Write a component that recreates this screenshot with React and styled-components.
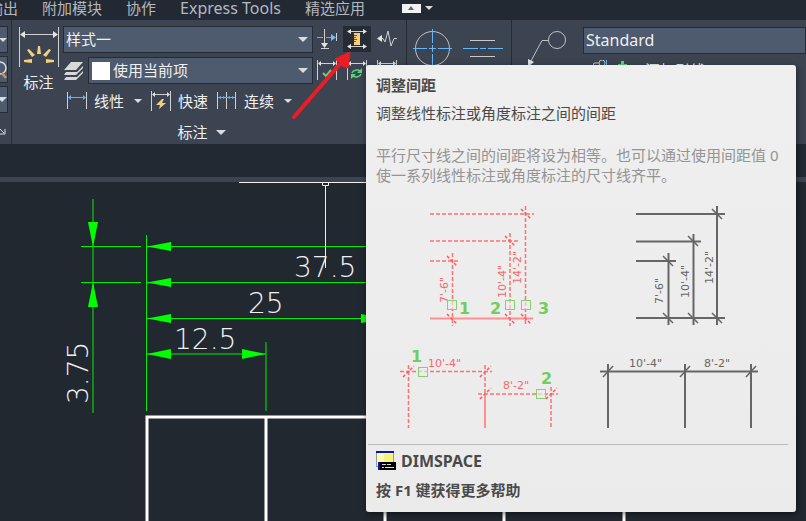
import styled, { createGlobalStyle } from "styled-components";

const quickTools = [
  { label: "线性", icon: <LinearIcon />, menu: true },
  { label: "快速", icon: <QuickIcon />, menu: false },
  { label: "连续", icon: <ContinueIcon />, menu: true },
];

const dimTools = [
  { label: "打断", icon: <BreakIcon /> },
  { label: "调整间距", icon: <SpaceIcon />, active: true },
  { label: "折弯标注", icon: <JogIcon /> },
  { label: "检验", icon: <CheckIcon /> },
  { label: "更新", icon: <UpdateIcon /> },
  { label: "重新关联", icon: <BarsIcon /> },
];

function App() {
  return (
    <>
      <GlobalStyle />
      <Window>
        <TabBar>
          <CutTab>
            <Tab href="#output">输出</Tab>
          </CutTab>
          <Tab href="#addins">附加模块</Tab>
          <Tab href="#collab">协作</Tab>
          <Tab href="#express" $latin>
            Express Tools
          </Tab>
          <Tab href="#featured">精选应用</Tab>
          <Collapse>
            <CollapseButton aria-label="最小化功能区">
              <svg width="6" height="4" viewBox="0 0 6 4">
                <path d="M0 4L3 0L6 4Z" fill="#666" />
              </svg>
            </CollapseButton>
            <Caret />
          </Collapse>
        </TabBar>

        <Ribbon>
          <EdgePanel />
          <DimensionPanel />
          <CenterPanel>
            <PlainButton aria-label="圆心标记">
              <CenterMarkIcon />
            </PlainButton>
            <PlainButton aria-label="中心线">
              <CenterLineIcon />
            </PlainButton>
          </CenterPanel>
          <LeaderPanel>
            <PlainButton aria-label="多重引线">
              <LeaderIcon />
            </PlainButton>
            <LeaderColumn>
              <Combo $latin>
                <select aria-label="多重引线样式">
                  <option>Standard</option>
                </select>
              </Combo>
              <AddLeader>
                <AddLeaderIcon />
                添加引线
              </AddLeader>
            </LeaderColumn>
          </LeaderPanel>
        </Ribbon>

        <FileTabs />
        <Canvas>
          <Drawing />
        </Canvas>

        <Pointer />
        <Tooltip />
      </Window>
    </>
  );
}

export default App;

function EdgePanel() {
  return (
    <Edge>
      <EdgeBox aria-label="文字样式">
        <Caret $size={8} />
      </EdgeBox>
      <EdgeBox aria-label="查找文字">
        <svg width="14" height="20" viewBox="0 0 14 20">
          <circle cx="7" cy="8" r="6" fill="none" stroke="#ddd" strokeWidth="1.5" />
          <path d="M9 13L13 18" stroke="#c9935f" strokeWidth="2.5" />
        </svg>
      </EdgeBox>
      <EdgeBox aria-label="文字高度">
        <Caret $size={10} />
      </EdgeBox>
      <Launcher aria-label="文字设置">
        <svg width="6" height="6" viewBox="0 0 6 6">
          <path d="M0 0L4 4M5 0V5H0" fill="none" stroke="#ddd" />
        </svg>
      </Launcher>
    </Edge>
  );
}

function DimensionPanel() {
  return (
    <Dimension>
      <DimensionMain>
        <BigButton>
          <DimIcon />
          标注
        </BigButton>
        <Middle>
          <Combo>
            <select aria-label="标注样式">
              <option>样式一</option>
            </select>
            <Caret $size={10} />
          </Combo>
          <LayerRow>
            <LayersIcon />
            <Combo $swatch>
              <select aria-label="标注图层">
                <option>使用当前项</option>
              </select>
              <Swatch />
              <Caret $size={10} />
            </Combo>
          </LayerRow>
          <QuickRow>
            {quickTools.map((tool) => (
              <QuickGroup key={tool.label}>
                <QuickButton>
                  {tool.icon}
                  {tool.label}
                </QuickButton>
                {tool.menu && <Caret />}
              </QuickGroup>
            ))}
          </QuickRow>
        </Middle>
        <ToolGrid>
          {dimTools.map((tool) => (
            <ToolButton
              key={tool.label}
              aria-label={tool.label}
              $active={tool.active}
            >
              {tool.icon}
            </ToolButton>
          ))}
        </ToolGrid>
      </DimensionMain>
      <PanelTitle>
        标注
        <Caret $size={10} />
      </PanelTitle>
    </Dimension>
  );
}

function Caret({ $size = 8 }) {
  return (
    <CaretSvg width={$size} height={$size / 2} viewBox="0 0 10 5">
      <path d="M0 0H10L5 5Z" fill="#dcdcdc" />
    </CaretSvg>
  );
}

function DimIcon() {
  return (
    <svg width="40" height="42" viewBox="0 0 40 42">
      <path d="M0.5 1V41M39.5 1V41M2 8.5H38" stroke="#cfd0d2" />
      <path d="M1 8.5L6 5V12ZM39 8.5L34 5V12Z" fill="#e3e3e3" />
      <g fill="#f8cf79">
        <path d="M19 20H21L22 28H18Z" />
        <path d="M8 24L10 23L16 29L13 31Z" />
        <path d="M32 24L30 23L24 29L27 31Z" />
        <path d="M5 34L13 33V37L5 36Z" />
        <path d="M35 34L27 33V37L35 36Z" />
      </g>
    </svg>
  );
}

function LayersIcon() {
  return (
    <svg width="20" height="20" viewBox="0 0 20 20" fill="#d9d9d9">
      <path d="M7 1H19L12 9H0Z" />
      <path d="M2 11H13L19 5V7L12 14H0Z" />
      <path d="M2 16H13L19 10V12L12 19H0Z" />
    </svg>
  );
}

function LinearIcon() {
  return (
    <svg width="20" height="20" viewBox="0 0 20 20">
      <path d="M0.5 1V18M19.5 1V18" stroke="#cfd0d2" />
      <path d="M2 6.5H18" stroke="#58b4f5" />
      <path d="M1 6.5L4 4V9ZM19 6.5L16 4V9Z" fill="#58b4f5" />
    </svg>
  );
}

function QuickIcon() {
  return (
    <svg width="20" height="20" viewBox="0 0 20 20">
      <path d="M0.5 0V20M19.5 0V20M2 3.5H18" stroke="#cfd0d2" />
      <path d="M1 3.5L4 1V6ZM19 3.5L16 1V6Z" fill="#e3e3e3" />
      <path d="M11 8L5 14H9L8 18L15 12H11L13 8Z" fill="#f8cf79" />
    </svg>
  );
}

function ContinueIcon() {
  return (
    <svg width="20" height="20" viewBox="0 0 20 20">
      <path d="M0.5 1V18M9.5 1V18M18.5 1V18" stroke="#cfd0d2" />
      <path d="M1 6.5H18" stroke="#58b4f5" />
      <path
        d="M1 6.5L4 5V8ZM9 6.5L6 5V8ZM10 6.5L13 5V8ZM18 6.5L15 5V8Z"
        fill="#58b4f5"
      />
    </svg>
  );
}

function BreakIcon() {
  return (
    <svg width="20" height="20" viewBox="0 0 20 20">
      <path d="M7.5 0V15M4 19.5H12M19.5 4V12" stroke="#cfd0d2" />
      <path d="M0 8.5H6M9 8.5H15" stroke="#58b4f5" />
      <path d="M14 5L19 8.5L14 12Z" fill="#6cbcf6" />
      <path d="M4 14H11L7.5 19Z" fill="#e3e3e3" />
    </svg>
  );
}

function SpaceIcon() {
  return (
    <svg width="20" height="20" viewBox="0 0 20 20">
      <path d="M2 2.5H18M2 17.5H18" stroke="#cfd0d2" />
      <path
        d="M0 2.5L4 0V5ZM20 2.5L16 0V5ZM0 17.5L4 15V20ZM20 17.5L16 15V20Z"
        fill="#e3e3e3"
      />
      <rect x="7" y="4" width="6" height="12" fill="#f8cf79" />
      <path d="M7 6.5H10M7 8.5H9M7 10.5H10M7 12.5H9" stroke="#6b5a35" />
    </svg>
  );
}

function JogIcon() {
  return (
    <svg width="20" height="20" viewBox="0 0 20 20">
      <path
        d="M3 9.5H6L8 13L11 2L14 17L17 9.5H20"
        fill="none"
        stroke="#cfd0d2"
      />
      <path d="M0 9.5L5 6V13Z" fill="#e3e3e3" />
    </svg>
  );
}

function BarsIcon({ children }) {
  return (
    <svg width="20" height="20" viewBox="0 0 20 20">
      <path d="M0.5 0V20M19.5 0V20M2 3.5H18" stroke="#cfd0d2" />
      <path d="M1 3.5L4 1V6ZM19 3.5L16 1V6Z" fill="#e3e3e3" />
      {children}
    </svg>
  );
}

function CheckIcon() {
  return (
    <BarsIcon>
      <path d="M6 13L9 16L14 10" fill="none" stroke="#5fd27f" strokeWidth="2" />
    </BarsIcon>
  );
}

function UpdateIcon() {
  return (
    <BarsIcon>
      <path
        d="M5 13A5 4 0 0 1 13 11M14 14A5 4 0 0 1 6 16"
        fill="none"
        stroke="#5fd27f"
        strokeWidth="1.5"
      />
      <path d="M15 8V13H10ZM4 19V14H9Z" fill="#5fd27f" />
    </BarsIcon>
  );
}

function CenterMarkIcon() {
  return (
    <svg width="40" height="40" viewBox="0 0 40 40">
      <circle cx="19.5" cy="19.5" r="17" fill="none" stroke="#c0c1c4" />
      <path
        d="M0 19.5H14M16 19.5H23M25 19.5H39M19.5 0V14M19.5 16V23M19.5 25V39"
        stroke="#5fb8f7"
      />
    </svg>
  );
}

function CenterLineIcon() {
  return (
    <svg width="40" height="40" viewBox="0 0 40 40">
      <path d="M7 11.5H32M7 27.5H32" stroke="#c9cacc" />
      <path d="M0 19.5H15M17 19.5H23M25 19.5H40" stroke="#5fb8f7" />
    </svg>
  );
}

function LeaderIcon() {
  return (
    <svg width="42" height="40" viewBox="0 0 42 40">
      <circle cx="32" cy="13" r="8.5" fill="none" stroke="#c0c1c4" />
      <path d="M23 13.5H17L6 34" fill="none" stroke="#c0c1c4" />
      <path d="M3 32L9 35L3 40Z" fill="#e3e3e3" />
    </svg>
  );
}

function AddLeaderIcon() {
  return (
    <svg width="48" height="20" viewBox="0 0 48 20">
      <circle cx="11" cy="3" r="3" fill="none" stroke="#c0c1c4" />
      <path d="M8 3H3L0 12" fill="none" stroke="#c0c1c4" />
      <path d="M15.5 0V8" stroke="#5fb8f7" />
      <path d="M30 1H33V4H36V7H33V10H30V7H27V4H30Z" fill="#5fd27f" />
    </svg>
  );
}

function Drawing() {
  return (
    <svg width="100%" height="100%" aria-label="图形">
      <g stroke="#00ee00" strokeWidth="1">
        <path d="M93 17V231" />
        <path d="M81 64.5H141M81 100.5H141" />
        <path d="M146.5 53V229M266 160V229" />
        <path d="M147 64.5H520M147 100.5H520M147 136.5H385M147 172H266" />
      </g>
      <g fill="#00ff00">
        <path d="M88 40H98L93 65ZM88 125H98L93 100Z" />
        <path d="M147 64.5L171 60V69ZM147 100.5L171 96V105Z" />
        <path d="M147 136.5L171 132V141ZM147 172L171 167V177Z" />
        <path d="M385 136.5L361 132V141ZM266 172L242 167V177Z" />
      </g>
      <path
        d="M147 339V235H624V339M266 235V339M385 235V339M504 235V339"
        fill="none"
        stroke="#fff"
        strokeWidth="3"
      />
      <path
        d="M239 0.5H430M322.5 1V3.5H328.5V1M325.5 4V86"
        fill="none"
        stroke="#f2f2f2"
      />
      <DrawingText x="294" y="95">37.5</DrawingText>
      <DrawingText x="248" y="131">25</DrawingText>
      <DrawingText x="174" y="167">12.5</DrawingText>
      <DrawingText transform="translate(88 222) rotate(-90)">3.75</DrawingText>
    </svg>
  );
}

function Pointer() {
  return (
    <PointerSvg width="62" height="70" viewBox="0 0 62 70">
      <path
        d="M4 66L49 14"
        stroke="#ed1c24"
        strokeWidth="4"
        strokeLinecap="round"
      />
      <path d="M60 1L45 8L50 12L52 15L58 17Z" fill="#ed1c24" stroke="#ed1c24" />
    </PointerSvg>
  );
}

function BeforeFigure() {
  return (
    <svg width="200" height="240" viewBox="0 0 200 240">
      <g stroke="#ff7070" strokeWidth="1.5" strokeDasharray="4 2">
        <path d="M54 19H158M54 46H142M54 66H84" />
        <path d="M76.5 58V131M134 38V131M149.5 11V131" />
        <path d="M24 176.5H116M102 199H182" />
        <path d="M32.5 170V233M109 170V233M175 192V233" />
      </g>
      <path d="M54 123.5H157M109 199V233" stroke="#ff8f8f" strokeWidth="2" />
      <g stroke="#ff5a5a" strokeWidth="1.5" strokeDasharray="3 2">
        <path d="M145 14L155 24M129 41L139 51M71 61L81 71" />
        <path d="M71 119L81 129M129 119L139 129M145 119L155 129" />
        <path d="M27 182L38 171M104 182L115 171M104 204L115 193M170 204L181 193" />
      </g>
      <g fill="#f46a6a">
        <FigureText transform="translate(72 108) rotate(-90)">7'-6"</FigureText>
        <FigureText transform="translate(130 103) rotate(-90)">10'-4"</FigureText>
        <FigureText transform="translate(145 89) rotate(-90)">14'-2"</FigureText>
        <FigureText x="52" y="172">10'-4"</FigureText>
        <FigureText x="127" y="194">8'-2"</FigureText>
      </g>
      <g fill="#eee" fillOpacity="0.6" stroke="#85d070" strokeWidth="1">
        <rect x="71.5" y="105.5" width="9" height="9" />
        <rect x="129.5" y="105.5" width="9" height="9" />
        <rect x="145.5" y="105.5" width="9" height="9" />
        <rect x="42.5" y="172.5" width="9" height="9" />
        <rect x="160.5" y="194.5" width="9" height="9" />
      </g>
      <PickNumber x="83" y="119">1</PickNumber>
      <PickNumber x="114" y="119">2</PickNumber>
      <PickNumber x="162" y="119">3</PickNumber>
      <PickNumber x="35" y="167">1</PickNumber>
      <PickNumber x="165" y="189">2</PickNumber>
    </svg>
  );
}

function AfterFigure() {
  return (
    <svg width="200" height="240" viewBox="0 0 200 240">
      <g stroke="#666" strokeWidth="2">
        <path d="M60 19H149M60 46.5H125M60 66H100M60 123H149" />
        <path d="M92.5 58V130M117.5 39V130M141 11V130" />
        <path d="M24 176.5H182M32 169V233M109 169V233M175 169V233" />
      </g>
      <g stroke="#666" strokeWidth="1.5">
        <path d="M136 14L146 24M112 41L122 51M87 61L97 71" />
        <path d="M87 118L97 128M112 118L122 128M136 118L146 128" />
        <path d="M27 182L37 171M104 182L114 171M170 182L180 171" />
      </g>
      <g fill="#666">
        <FigureText transform="translate(87 109) rotate(-90)">7'-6"</FigureText>
        <FigureText transform="translate(113 103) rotate(-90)">10'-4"</FigureText>
        <FigureText transform="translate(137 89) rotate(-90)">14'-2"</FigureText>
        <FigureText x="53" y="172">10'-4"</FigureText>
        <FigureText x="128" y="172">8'-2"</FigureText>
      </g>
    </svg>
  );
}

function CommandIcon() {
  return (
    <svg width="20" height="20" viewBox="0 0 20 20">
      <rect x="0.5" y="0.5" width="17" height="15" fill="#fbfbb4" stroke="#999" />
      <path d="M8 3H17V11L8 15Z" fill="#f6f27a" />
      <rect width="18" height="2" fill="#0018b8" />
      <rect x="2" y="11" width="3" height="8" fill="#0018b8" />
      <rect x="4" y="11" width="16" height="8" fill="#000" />
      <path d="M6 13.5H10M11 13.5H15M6 16.5H8M9 16.5H18" stroke="#ddd" />
    </svg>
  );
}

function Tooltip() {
  return (
    <Tip role="tooltip">
      <TipTitle>调整间距</TipTitle>
      <TipText>调整线性标注或角度标注之间的间距</TipText>
      <TipDetail>
        平行尺寸线之间的间距将设为相等。也可以通过使用间距值 0
        <br />
        使一系列线性标注或角度标注的尺寸线齐平。
      </TipDetail>
      <Figures>
        <BeforeFigure />
        <AfterFigure />
      </Figures>
      <TipFooter>
        <Command>
          <CommandIcon />
          DIMSPACE
        </Command>
        <Help>按 F1 键获得更多帮助</Help>
      </TipFooter>
    </Tip>
  );
}

const GlobalStyle = createGlobalStyle`
  * {
    box-sizing: border-box;
  }

  body {
    margin: 0;
    background-color: #222830;
    font-family: "Noto Sans", "Noto Sans CJK SC", sans-serif;
    font-size: 15px;
    line-height: 20px;
    color: #f0f0f0;
  }

  button,
  select {
    font: inherit;
    color: inherit;
    border: none;
    padding: 0;
    margin: 0;
    background: none;
  }

  svg {
    display: block;
    flex-shrink: 0;
  }
`;

const Window = styled.div`
  position: relative;
  min-height: 100vh;
  display: flex;
  flex-direction: column;
  overflow: hidden;
`;

const TabBar = styled.nav`
  display: flex;
  gap: 24px;
  height: 20px;
  background-color: #222933;
  line-height: 16px;
`;

const CutTab = styled.div`
  width: 18px;
  display: flex;
  justify-content: flex-end;
`;

const Tab = styled.a`
  font-size: ${(props) => (props.$latin ? "16px" : "15px")};
  color: #b4b9c0;
  text-decoration: none;
  white-space: nowrap;
`;

const Collapse = styled.div`
  display: flex;
  align-items: center;
  gap: 4px;
  height: 16px;
  margin-left: 13px;
`;

const CollapseButton = styled.button`
  width: 19px;
  height: 9px;
  background-color: #f2f2f2;
  display: flex;
  align-items: center;
  justify-content: center;
`;

const Ribbon = styled.header`
  display: flex;
  height: 124px;
  background-color: #3c4452;
`;

const CaretSvg = styled.svg`
  align-self: center;
`;

const Edge = styled.div`
  width: 12px;
  padding-top: 6px;
  border-right: 1px solid #262c36;
  display: flex;
  flex-direction: column;
  align-items: flex-start;
  gap: 3px;
`;

const EdgeBox = styled.button`
  width: 8px;
  height: 27px;
  border: 1px solid #262c36;
  border-left: none;
  background-color: #4e5a6d;
  display: flex;
  align-items: center;
  justify-content: flex-end;
  overflow: hidden;
`;

const Launcher = styled.button`
  margin-top: 13px;
`;

const Dimension = styled.section`
  width: 395px;
  padding: 6px 5px 0 6px;
  border-right: 1px solid #262c36;
  display: flex;
  flex-direction: column;
  justify-content: space-between;
`;

const DimensionMain = styled.div`
  display: flex;
`;

const BigButton = styled.button`
  width: 41px;
  margin-right: 4px;
  align-self: flex-start;
  display: flex;
  flex-direction: column;
  align-items: center;
  gap: 4px;
`;

const Middle = styled.div`
  width: 250px;
  display: flex;
  flex-direction: column;
  gap: 4px;
`;

const Combo = styled.div`
  flex: 1;
  display: grid;
  align-items: center;
  font-size: ${(props) => (props.$latin ? "16px" : "15px")};

  & > * {
    grid-area: 1 / 1;
  }

  & > svg {
    justify-self: end;
    margin-right: 5px;
    pointer-events: none;
  }

  select {
    width: 100%;
    height: 27px;
    padding: 0 0 2px ${(props) => (props.$swatch ? "24px" : "2px")};
    appearance: none;
    border: 1px solid #262c36;
    background-color: #4e5a6d;
  }
`;

const Swatch = styled.span`
  width: 18px;
  height: 18px;
  margin-left: 4px;
  background-color: #fff;
  pointer-events: none;
`;

const LayerRow = styled.div`
  display: flex;
  align-items: center;
  gap: 4px;
  padding-left: 1px;
`;

const QuickRow = styled.div`
  display: flex;
  gap: 9px;
  padding: 3px 0 0 4px;
`;

const QuickGroup = styled.div`
  display: flex;
  gap: 10px;
`;

const QuickButton = styled.button`
  display: flex;
  align-items: center;
  gap: 7px;
  white-space: nowrap;
`;

const ToolGrid = styled.div`
  display: grid;
  grid-template-columns: repeat(3, 28px);
  grid-auto-rows: 26px;
  gap: 5px 2px;
  align-content: start;
`;

const ToolButton = styled.button`
  display: flex;
  align-items: center;
  justify-content: center;
  background-color: ${(props) => (props.$active ? "#252c36" : "transparent")};
`;

const PanelTitle = styled.div`
  display: flex;
  justify-content: center;
  gap: 8px;
  padding: 0 16px 2px 0;
`;

const CenterPanel = styled.section`
  padding: 9px 8px 0 6px;
  border-right: 1px solid #262c36;
  display: flex;
  align-items: flex-start;
  gap: 10px;
`;

const PlainButton = styled.button`
  display: block;
`;

const LeaderPanel = styled.section`
  flex: 1;
  padding: 7px 0 0 13px;
  display: flex;
  align-items: flex-start;
  gap: 16px;
  overflow: hidden;
`;

const LeaderColumn = styled.div`
  flex: 1;
  display: flex;
  flex-direction: column;
  gap: 6px;
`;

const AddLeader = styled.button`
  display: flex;
  gap: 6px;
  padding-left: 8px;
`;

const FileTabs = styled.div`
  height: 38px;
  background-color: #222933;
  border-bottom: 5px solid #3c4452;
`;

const Canvas = styled.main`
  flex: 1;
  display: grid;
  background-color: #222830;
`;

const DrawingText = styled.text`
  font-family: "DejaVu Sans Light", "DejaVu Sans", sans-serif;
  font-size: 28px;
  font-weight: 200;
  fill: #f0f0f0;
`;

const FigureText = styled.text`
  font-family: "DejaVu Sans", sans-serif;
  font-size: 11px;
`;

const PickNumber = styled.text`
  font-family: "DejaVu Sans", sans-serif;
  font-size: 16px;
  font-weight: 700;
  fill: #74cc5c;
`;

/* red callout arrow lies over the ribbon */
const PointerSvg = styled.svg`
  position: absolute;
  left: 290px;
  top: 51px;
  fill: none;
`;

const Tip = styled.div`
  position: absolute;
  left: 366px;
  top: 65px;
  width: 430px;
  padding: 10px 8px 12px 10px;
  border-radius: 3px;
  background: linear-gradient(#efefef, #ebebeb);
  box-shadow: 1px 2px 6px rgba(0, 0, 0, 0.5);
  color: #4a4a4a;
`;

const TipTitle = styled.div`
  font-weight: 700;
`;

const TipText = styled.p`
  margin: 8px 0 0;
`;

const TipDetail = styled.p`
  margin: 22px 0 0;
  color: #949494;
  white-space: nowrap;
`;

const Figures = styled.div`
  display: flex;
  margin-top: 10px;
`;

const TipFooter = styled.div`
  margin: 9px 0 0 -8px;
  padding: 6px 0 0 8px;
  border-top: 1px solid #bbb;
  font-weight: 700;
`;

const Command = styled.div`
  display: flex;
  align-items: center;
  gap: 5px;
  font-size: 16px;
`;

const Help = styled.div`
  margin-top: 9px;
`;
